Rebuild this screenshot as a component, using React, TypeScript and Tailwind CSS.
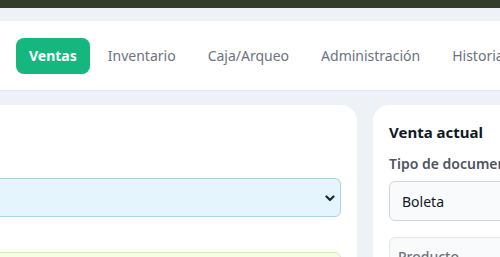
import React from 'react';

const tabs = ['Ventas', 'Inventario', 'Caja/Arqueo', 'Administración', 'Historial'];

const App = () => {
  return (
    <div
      className="w-[500px] h-[257px] overflow-hidden bg-[#eef1f5]"
      style={{ fontFamily: '"Noto Sans", "Open Sans", sans-serif' }}
    >
      <div className="h-2 bg-[#323d2b]" />

      {/* Navegación */}
      <nav className="mt-[13px] h-[70px] bg-white border-b border-[#e3e6ea] flex items-center px-4 gap-1 whitespace-nowrap">
        {tabs.map((t, i) => (
          <button
            key={t}
            className={
              i === 0
                ? 'h-9 px-[13px] rounded-lg bg-[#16b77f] text-white text-[14px] font-bold'
                : 'h-9 px-[14px] rounded-lg text-[#6b7280] text-[14px]'
            }
          >
            {t}
          </button>
        ))}
      </nav>

      <div className="mt-[14px] -ml-6 flex gap-4">
        {/* Catálogo */}
        <section className="w-[381px] shrink-0 h-[200px] bg-white rounded-2xl px-4 pt-[73px]">
          <div className="relative h-[39px] rounded-md border border-[#a9d3df] bg-[#e4f5fd]">
            <svg
              className="absolute right-[5px] top-[16px]"
              width="10"
              height="7"
              viewBox="0 0 10 7"
              fill="none"
              stroke="#1f2937"
              strokeWidth="2.2"
              strokeLinecap="round"
              strokeLinejoin="round"
            >
              <path d="M1.5 1.5 5 5l3.5-3.5" />
            </svg>
          </div>
          <div className="mt-[35px] h-12 rounded-md border border-[#d3e6b5] bg-[#f6fde8]" />
        </section>

        {/* Venta actual */}
        <section className="w-[360px] shrink-0 h-[200px] bg-white rounded-2xl px-4 pt-[15px]">
          <h2 className="text-[15px] font-bold text-[#111827] leading-6">Venta actual</h2>
          <p className="mt-[10px] text-[14px] font-semibold text-[#4b5563] leading-5">Tipo de documento</p>
          <div className="mt-[7px] h-10 rounded-md border border-[#d1d5db] bg-[#f9fafb] px-3 flex items-center text-[14px] text-[#111827]">
            Boleta
          </div>
          <div className="mt-4 rounded-md border border-[#e5e7eb] bg-[#f9fafb] px-[8px] pt-[8px] h-12 leading-5">
            <span className="text-[14px] font-medium text-[#6b7280]">Producto</span>
          </div>
        </section>
      </div>
    </div>
  );
};

export default App;
